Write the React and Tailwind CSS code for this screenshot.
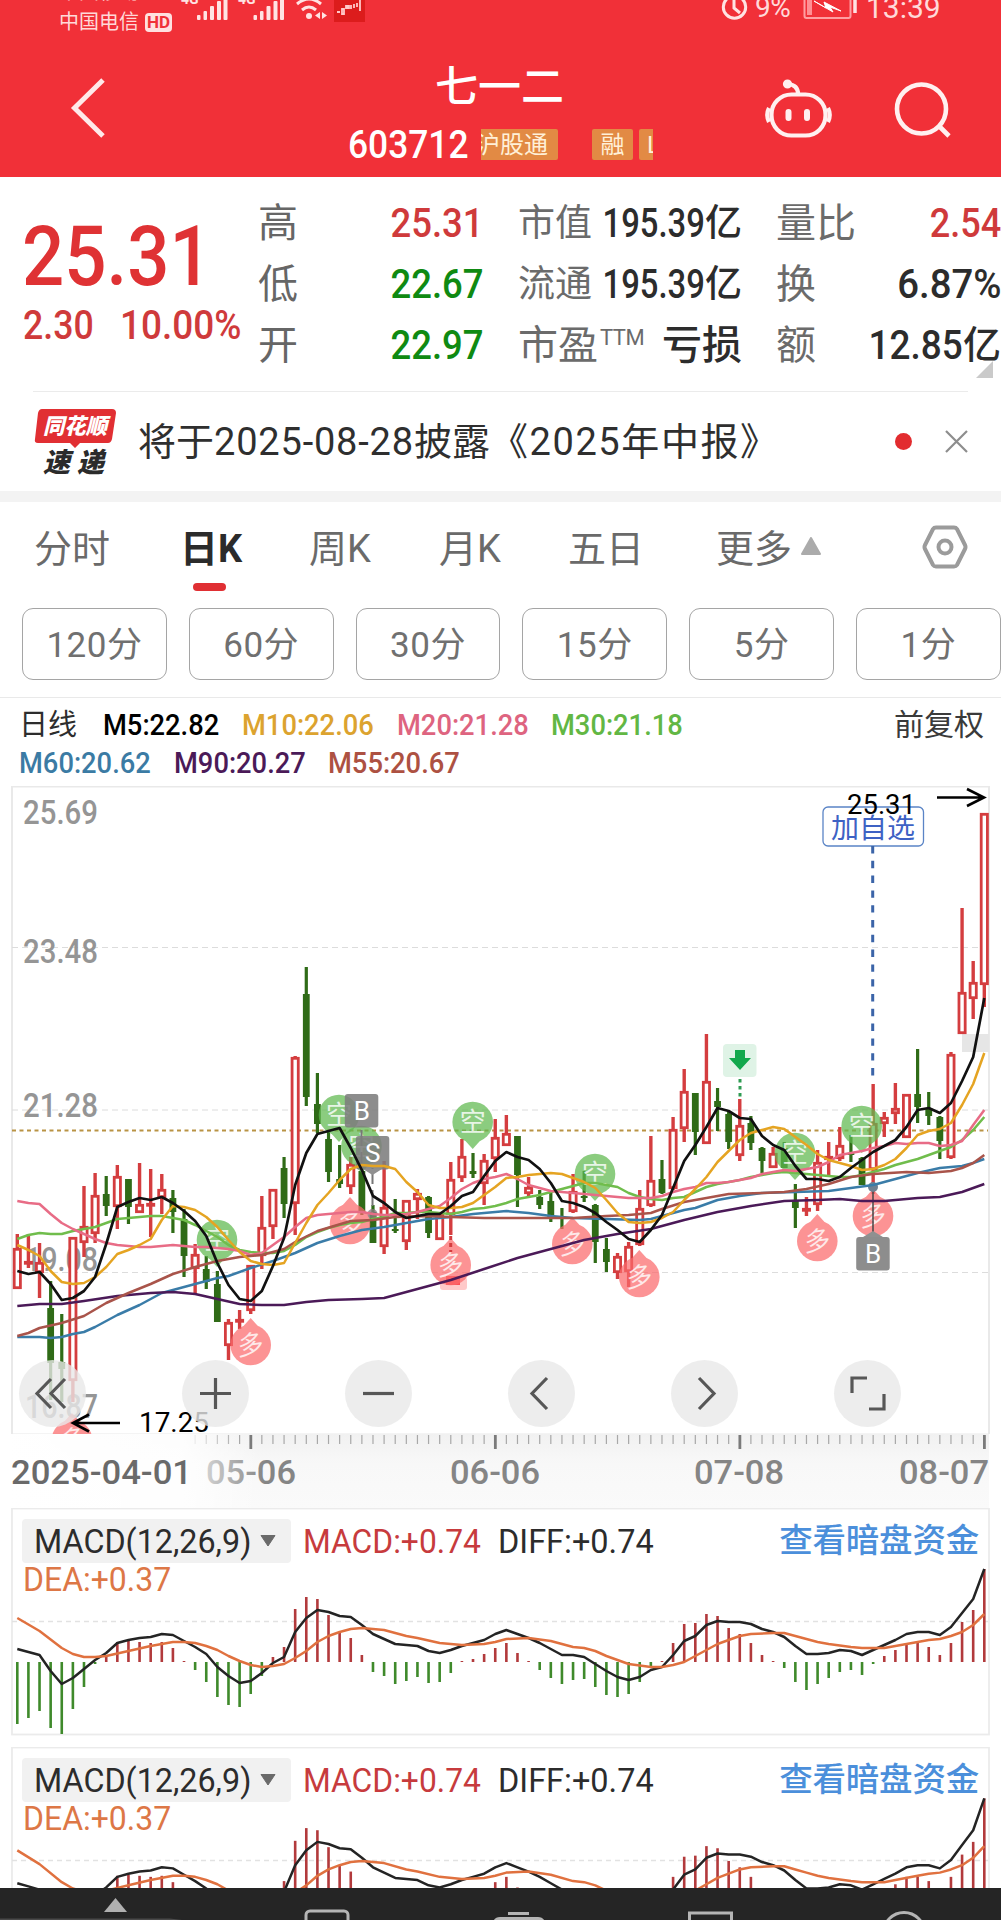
import React from 'react';
import clsx from 'clsx';

const RED = '#d43d3f';
const GREEN = '#2f6b17';
const CJK = "Roboto, 'Noto Sans CJK SC', sans-serif";

const px = (i) => 17.3 + i * 11.115;

// [high, body top, body bottom, low, up?]
const CANDLES = [
    [1234, 1248, 1289, 1289, 1], [1234, 1261, 1263, 1268, 1], [1243, 1262, 1273, 1298, 1], [1281, 1308, 1363, 1400, 0],
    [1314, 1362, 1369, 1402, 0], [1237, 1237, 1381, 1402, 1], [1186, 1226, 1243, 1257, 1], [1173, 1195, 1234, 1243, 1],
    [1176, 1194, 1206, 1216, 0], [1165, 1176, 1207, 1229, 1], [1179, 1179, 1207, 1224, 0], [1163, 1204, 1213, 1213, 1],
    [1169, 1203, 1205, 1237, 1], [1174, 1189, 1198, 1214, 1], [1190, 1198, 1212, 1233, 0], [1209, 1219, 1256, 1277, 0],
    [1244, 1254, 1269, 1293, 1], [1256, 1269, 1282, 1289, 0], [1271, 1284, 1322, 1322, 0], [1319, 1322, 1346, 1360, 1],
    [1310, 1319, 1321, 1329, 1], [1265, 1265, 1311, 1314, 1], [1196, 1227, 1256, 1269, 1], [1189, 1189, 1227, 1239, 1],
    [1157, 1168, 1204, 1218, 0], [1056, 1057, 1204, 1235, 1], [967, 994, 1097, 1106, 0], [1073, 1104, 1124, 1133, 0],
    [1131, 1139, 1172, 1182, 0], [1145, 1179, 1184, 1188, 0], [1157, 1164, 1187, 1194, 1], [1165, 1171, 1212, 1215, 0],
    [1205, 1212, 1243, 1243, 0], [1161, 1207, 1247, 1254, 1], [1199, 1229, 1231, 1233, 0], [1200, 1200, 1242, 1250, 1],
    [1189, 1193, 1200, 1219, 1], [1196, 1197, 1233, 1238, 0], [1214, 1214, 1240, 1240, 1], [1162, 1179, 1215, 1235, 1],
    [1139, 1156, 1178, 1182, 1], [1153, 1171, 1174, 1178, 0], [1154, 1160, 1184, 1205, 1], [1119, 1137, 1159, 1172, 1],
    [1115, 1133, 1146, 1146, 1], [1136, 1136, 1175, 1207, 0], [1177, 1187, 1194, 1197, 1], [1190, 1197, 1205, 1209, 0],
    [1190, 1201, 1217, 1222, 0], [1208, 1217, 1218, 1229, 0], [1174, 1191, 1212, 1213, 1], [1171, 1196, 1198, 1202, 0],
    [1204, 1205, 1242, 1263, 0], [1238, 1249, 1262, 1272, 0], [1253, 1256, 1273, 1279, 1], [1242, 1246, 1272, 1287, 1],
    [1190, 1208, 1245, 1246, 1], [1136, 1180, 1206, 1207, 1], [1160, 1179, 1193, 1194, 0], [1117, 1129, 1189, 1190, 1],
    [1069, 1091, 1129, 1142, 1], [1093, 1093, 1132, 1155, 0], [1034, 1081, 1144, 1144, 1], [1088, 1101, 1107, 1131, 0],
    [1112, 1114, 1142, 1149, 0], [1099, 1125, 1156, 1161, 1], [1116, 1123, 1143, 1150, 0], [1147, 1148, 1161, 1173, 0],
    [1147, 1153, 1168, 1168, 1], [1142, 1148, 1168, 1168, 0], [1184, 1200, 1208, 1228, 0], [1197, 1208, 1211, 1216, 1],
    [1150, 1162, 1205, 1211, 1], [1142, 1156, 1160, 1175, 1], [1127, 1145, 1159, 1161, 1], [1135, 1153, 1155, 1162, 0],
    [1157, 1158, 1185, 1185, 0], [1084, 1123, 1170, 1194, 1], [1112, 1117, 1124, 1137, 1], [1083, 1108, 1114, 1124, 1],
    [1094, 1094, 1138, 1138, 1], [1049, 1094, 1107, 1123, 0], [1092, 1108, 1116, 1125, 0], [1116, 1117, 1141, 1159, 0],
    [1052, 1054, 1158, 1159, 1], [908, 992, 1034, 1034, 1], [961, 982, 999, 1019, 1], [813, 813, 985, 1007, 1],
];

// one value per bar
const M5 = [
    1271, 1274, 1272, 1284, 1300, 1298, 1291, 1277, 1244, 1207, 1202, 1198, 1200, 1197, 1203, 1211, 1221, 1236, 1263, 1285, 1299, 1301,
    1291, 1266, 1238, 1185, 1153, 1134, 1131, 1128, 1148, 1170, 1196, 1203, 1212, 1218, 1216, 1214, 1214, 1206, 1196, 1192, 1176, 1161,
    1152, 1157, 1160, 1169, 1183, 1201, 1203, 1207, 1213, 1222, 1230, 1239, 1242, 1230, 1215, 1188, 1161, 1145, 1127, 1108, 1111, 1118,
    1119, 1136, 1145, 1150, 1166, 1179, 1179, 1181, 1177, 1168, 1160, 1152, 1146, 1140, 1127, 1110, 1108, 1113, 1103, 1081, 1057, 998,
];
const M10 = [
    1245, 1250, 1256, 1271, 1282, 1284, 1283, 1277, 1267, 1254, 1250, 1245, 1239, 1220, 1206, 1207, 1210, 1217, 1227, 1240, 1252, 1261,
    1264, 1265, 1263, 1243, 1223, 1205, 1193, 1180, 1169, 1165, 1166, 1166, 1169, 1182, 1192, 1205, 1208, 1208, 1207, 1203, 1195, 1187,
    1178, 1177, 1175, 1174, 1173, 1174, 1178, 1182, 1188, 1200, 1213, 1222, 1223, 1222, 1218, 1212, 1200, 1189, 1177, 1162, 1151, 1140,
    1133, 1130, 1127, 1129, 1137, 1145, 1154, 1160, 1163, 1166, 1170, 1169, 1165, 1159, 1148, 1135, 1131, 1129, 1123, 1105, 1084, 1053,
];
const M20 = [
    1201, 1203, 1204, 1214, 1223, 1229, 1234, 1239, 1243, 1245, 1246, 1247, 1247, 1246, 1245, 1246, 1247, 1247, 1248, 1249, 1251, 1255,
    1253, 1245, 1237, 1227, 1218, 1215, 1214, 1213, 1212, 1212, 1214, 1215, 1215, 1214, 1212, 1209, 1206, 1198, 1189, 1183, 1179, 1177,
    1174, 1179, 1185, 1188, 1191, 1192, 1193, 1194, 1195, 1196, 1197, 1198, 1198, 1198, 1196, 1192, 1189, 1187, 1183, 1183, 1182, 1180,
    1178, 1174, 1172, 1170, 1171, 1169, 1167, 1162, 1155, 1153, 1151, 1148, 1146, 1143, 1144, 1143, 1143, 1146, 1145, 1141, 1125, 1110,
];
const M30 = [
    1239, 1235, 1233, 1234, 1234, 1231, 1229, 1227, 1223, 1219, 1218, 1217, 1216, 1216, 1218, 1220, 1225, 1231, 1237, 1245, 1250, 1252,
    1253, 1253, 1251, 1245, 1237, 1232, 1228, 1225, 1223, 1222, 1219, 1217, 1213, 1213, 1212, 1212, 1213, 1214, 1212, 1209, 1208, 1206,
    1203, 1199, 1197, 1195, 1192, 1189, 1186, 1183, 1183, 1185, 1187, 1193, 1197, 1199, 1200, 1198, 1197, 1192, 1187, 1184, 1182, 1180,
    1177, 1175, 1173, 1172, 1173, 1174, 1175, 1176, 1177, 1177, 1175, 1172, 1169, 1165, 1162, 1159, 1155, 1151, 1147, 1140, 1130, 1117,
];

// [bar index, y]
const M60 = [
    [0, 1337], [2, 1337], [3, 1338], [4, 1337], [5, 1334], [6, 1332], [7, 1327], [9, 1315], [11, 1305], [13, 1293], [14, 1290], [16, 1284],
    [18, 1278], [19, 1276], [21, 1268], [23, 1261], [25, 1253], [27, 1243], [29, 1236], [31, 1230], [33, 1227], [35, 1223], [37, 1219],
    [39, 1217], [41, 1214], [43, 1212], [44, 1211], [46, 1213], [48, 1216], [50, 1218], [53, 1219], [56, 1220], [57, 1219], [58, 1216],
    [60, 1210], [61, 1208], [63, 1200], [65, 1196], [67, 1193], [70, 1192], [73, 1191], [75, 1188], [77, 1185], [79, 1179], [81, 1173],
    [83, 1168], [85, 1166], [86, 1163], [87, 1159],
];
const M90 = [
    [0, 1306], [2, 1304], [4, 1304], [6, 1301], [9, 1296], [12, 1293], [14, 1292], [16, 1294], [18, 1299], [20, 1304], [22, 1305],
    [24, 1305], [26, 1302], [28, 1300], [31, 1299], [33, 1298], [36, 1289], [39, 1280], [42, 1269], [45, 1258], [48, 1249], [51, 1240],
    [54, 1234], [57, 1229], [60, 1220], [63, 1212], [66, 1206], [69, 1201], [72, 1200], [74, 1199], [76, 1201], [78, 1201], [81, 1198],
    [83, 1197], [85, 1192], [87, 1184],
];
const M55 = [
    [0, 1336], [1, 1333], [2, 1328], [4, 1323], [6, 1316], [8, 1303], [10, 1293], [12, 1284], [14, 1274], [16, 1267], [18, 1261],
    [20, 1257], [22, 1255], [24, 1249], [25, 1242], [27, 1231], [30, 1221], [32, 1220], [34, 1217], [37, 1216], [39, 1217], [42, 1218],
    [50, 1218], [53, 1216], [55, 1215], [57, 1213], [58, 1209], [60, 1202], [62, 1198], [64, 1194], [67, 1193], [69, 1192], [71, 1189],
    [73, 1184], [75, 1177], [77, 1174], [80, 1172], [82, 1173], [84, 1171], [85, 1168], [86, 1163], [87, 1155],
];

const MACD_BARS = [
    1724, 1718, 1711, 1728, 1734, 1709, 1687, 1664, 1657, 1642, 1641, 1642, 1643, 1642, 1648, 1661, 1670, 1682, 1697, 1705, 1707, 1694,
    1676, 1657, 1647, 1609, 1597, 1599, 1615, 1632, 1638, 1655, 1672, 1676, 1684, 1681, 1677, 1683, 1682, 1673, 1661, 1659, 1654, 1648,
    1643, 1653, 1661, 1670, 1678, 1684, 1680, 1679, 1687, 1695, 1697, 1694, 1682, 1666, 1661, 1643, 1624, 1623, 1614, 1616, 1628, 1634,
    1643, 1655, 1661, 1668, 1682, 1690, 1684, 1678, 1672, 1670, 1675, 1664, 1656, 1650, 1643, 1643, 1647, 1655, 1643, 1622, 1610, 1569,
];
const DIFF = [
    1649, 1652, 1655, 1671, 1684, 1678, 1669, 1660, 1653, 1643, 1640, 1638, 1637, 1634, 1635, 1641, 1647, 1654, 1667, 1676, 1683, 1681,
    1673, 1663, 1657, 1632, 1618, 1610, 1612, 1616, 1617, 1625, 1634, 1639, 1644, 1645, 1646, 1651, 1653, 1650, 1646, 1643, 1640, 1634,
    1630, 1634, 1638, 1643, 1649, 1655, 1655, 1657, 1664, 1671, 1677, 1680, 1677, 1670, 1667, 1655, 1641, 1636, 1625, 1621, 1622, 1622,
    1624, 1629, 1632, 1637, 1646, 1654, 1654, 1653, 1650, 1651, 1655, 1650, 1645, 1640, 1634, 1632, 1632, 1635, 1627, 1613, 1599, 1569,
];
const DEA = [
    [0, 1618], [2, 1631], [4, 1648], [5, 1654], [6, 1657], [7, 1657], [8, 1656], [10, 1651], [12, 1646], [14, 1642], [15, 1642], [16, 1643],
    [17, 1646], [18, 1650], [19, 1656], [20, 1661], [21, 1665], [22, 1667], [23, 1666], [24, 1664], [25, 1658], [26, 1651], [27, 1642],
    [28, 1636], [29, 1632], [30, 1629], [31, 1628], [32, 1629], [33, 1630], [35, 1636], [36, 1638], [38, 1643], [40, 1645], [42, 1644],
    [43, 1642], [44, 1639], [46, 1638], [48, 1641], [50, 1647], [51, 1648], [52, 1651], [53, 1656], [54, 1660], [55, 1664], [57, 1667],
    [58, 1667], [59, 1665], [60, 1662], [61, 1656], [62, 1650], [63, 1644], [64, 1640], [65, 1636], [66, 1634], [68, 1633], [69, 1633],
    [70, 1636], [71, 1639], [72, 1642], [73, 1644], [75, 1647], [76, 1648], [78, 1648], [79, 1646], [81, 1642], [82, 1640], [83, 1639],
    [84, 1636], [85, 1632], [86, 1625], [87, 1614],
];

const toPoints = (data) =>
    data.map((d, i) => (Array.isArray(d) ? `${px(d[0])},${d[1]}` : `${px(i)},${d}`)).join(' ');

const Line = ({ data, color, width = 2.5 }) => (
    <polyline points={toPoints(data)} fill="none" stroke={color} strokeWidth={width} strokeLinejoin="round" vectorEffect="non-scaling-stroke" />
);

const Label = ({ x, y, w, size, fill, weight = 400, opacity, children }) => (
    <text x={x} y={y} textLength={w} lengthAdjust="spacingAndGlyphs" fontSize={size} fill={fill} fontWeight={weight} opacity={opacity} fontFamily={CJK}>
        {children}
    </text>
);

const Bubble = ({ x, y, up }) => (
    <g transform={`translate(${x} ${y})`}>
        <g opacity="0.72">
            <circle r="20.3" fill={up ? '#fb6a6c' : '#5fb94f'} />
            <path d={up ? 'M-9 -17 L0 -27 L9 -17 Z' : 'M-9 17 L0 27 L9 17 Z'} fill={up ? '#fb6a6c' : '#5fb94f'} />
        </g>
        <text
            textAnchor="middle"
            y="9"
            fontSize="26"
            fill="#fff"
            opacity="0.8"
            transform={up ? 'rotate(-8) skewX(-8)' : undefined}
            fontFamily={CJK}
        >
            {up ? '多' : '空'}
        </text>
    </g>
);

const Flag = ({ x, y, letter }) => (
    <g>
        <rect x={x} y={y} width="33.5" height="33.5" rx="3" fill="#7d7d7d" opacity="0.88" />
        <text x={x + 17} y={y + 26} textAnchor="middle" fontSize="26" fill="#fff" fontFamily={CJK}>{letter}</text>
    </g>
);

const StatusBar = () => (
    <div className="flex h-9 justify-between overflow-hidden text-[#ffd9d9]">
        <div className="flex">
            <div className="ml-[59px] mt-[-21px] flex h-[56px] w-[116px] flex-col text-[20px] leading-[26px]">
                <span>中国移动</span>
                <div className="mt-[4px] flex items-center">
                    <span>中国电信</span>
                    <span className="ml-[6px] flex h-[19px] w-[27px] items-center justify-center rounded-[4px] bg-[#ffe0e0] text-[17px] font-bold text-[#f03038]">HD</span>
                </div>
            </div>
            <svg width="200" height="36" viewBox="175 0 200 36" fill="#ffe3e3">
                <text x="181" y="4" fontSize="14" fontWeight="700" fontFamily={CJK}>4G</text>
                <text x="238" y="4" fontSize="14" fontWeight="700" fontFamily={CJK}>4G</text>
                {[197, 253.5].map((x) => (
                    <g key={x}>
                        <rect x={x} y="15" width="3.5" height="5" rx="1" />
                        <rect x={x + 6.5} y="11" width="3.5" height="9" rx="1" />
                        <rect x={x + 13} y="6" width="4" height="14" rx="1" />
                        <rect x={x + 20} y="1" width="4" height="19" rx="1" />
                        <rect x={x + 26.5} y="-6" width="4" height="26" rx="1" />
                    </g>
                ))}
                <circle cx="309" cy="16" r="3" />
                <path d="M302 10 Q309 4 316 10 M297 4 Q309 -6 321 4" fill="none" stroke="#ffe3e3" strokeWidth="3" />
                <path d="M320 12 v7 l-5 -3.5 Z M322 12 v7 l5 -3.5 Z" />
                <rect x="334" y="-4" width="31" height="26" fill="#dc1c1c" />
                <path d="M337 12 h3 M342 9 v5 h2 v-5 Z M346 6 h3 v2 h-3 Z M351 5 v4 M354 4 v4 M357 3 v4 M360 -2 v13" stroke="#ffc9c9" strokeWidth="1.8" fill="none" />
            </svg>
        </div>
        <div className="mr-[58px] flex">
            <svg width="30" height="36" viewBox="720 0 30 36" fill="none" stroke="#ffe3e3" strokeWidth="3">
                <circle cx="734.5" cy="7" r="11.2" />
                <path d="M734 0 v8 l6 5" />
            </svg>
            <span className="mt-[-10px] w-[48px] pl-[5px] text-[28px] leading-9 tracking-[-0.5px]">9%</span>
            <svg width="66" height="36" viewBox="798 0 66 36" fill="none" stroke="#ff9ea2" strokeWidth="2">
                <rect x="804.500" y="-10" width="46" height="28" rx="2" />
                <rect x="807" y="-8" width="5" height="23" fill="#ff8f94" stroke="none" />
                <path d="M814 1 L826 8 L824 2 L841 11 L830 7 L833 12 Z" fill="#fff" stroke="#fff" strokeWidth="1" />
                <path d="M855 0 v13" stroke="#ffe3e3" strokeWidth="3.500" />
            </svg>
            <span className="mt-[-10px] w-[79px] pl-[2px] text-[30px] leading-9">13:39</span>
        </div>
    </div>
);

const Tag = ({ className, children }) => (
    <span className={clsx('flex h-[31px] shrink-0 items-center rounded-[2px] bg-[#e28a44] text-[24px] leading-none text-[#fff0d8]', className)}>
        {children}
    </span>
);

const Header = () => (
    <header className="h-[177px] bg-[#f13038]">
        <StatusBar />
        <div className="flex h-[141px]">
            <svg width="281" height="141" viewBox="0 36 281 141" fill="none" stroke="#ffe9e9" strokeWidth="5">
                <path d="M103 80 L74.500 108 L103 136" />
            </svg>
            <div className="flex w-[372px] flex-col pl-[67px]">
                <h1 className="mt-[19px] w-[300px] pl-[87px] text-[43px] font-medium leading-[64px] text-white">七一二</h1>
                <div className="mt-[10px] flex h-[31px] items-center">
                    <span className="inline-block w-[133px] shrink-0 origin-left scale-x-[0.93] text-[38px] font-medium leading-none text-white">603712</span>
                    <div className="flex w-[172px] overflow-hidden">
                        <Tag className="ml-[-13px] w-[90px] pl-[8px]">沪股通</Tag>
                        <Tag className="ml-[34px] w-[41px] justify-center">融</Tag>
                        <Tag className="ml-[6px] w-[60px] pl-[8px]">L1</Tag>
                    </div>
                </div>
            </div>
            <svg className="ml-auto" width="250" height="141" viewBox="751 36 250 141" fill="none" stroke="#fff0f0" strokeWidth="4.200">
                <rect x="771.500" y="94.500" width="54" height="41" rx="20" />
                <path d="M798 94 q0 -9 -10 -10" />
                <circle cx="787.500" cy="84" r="2.500" fill="#fff0f0" />
                <path d="M769 108 q-3.500 7 0 14 M828 108 q3.500 7 0 14" />
                <path d="M788.500 112 v6 M807 112 v6" strokeWidth="6" strokeLinecap="round" />
                <circle cx="921.500" cy="109" r="24.500" strokeWidth="4.600" />
                <path d="M938 125 L949 136" strokeWidth="4.600" />
            </svg>
        </div>
    </header>
);

const Num = ({ className, children }) => (
    <span className={clsx('inline-block text-[41px] font-medium leading-none', className)}>{children}</span>
);

const Quote = () => (
    <section className="relative flex h-[214px]">
        <div className="w-[258px] pl-6 text-[#df3234]">
            <div className="ml-[-2px] mt-[38px] w-[200px] origin-left scale-x-[0.885] text-[84px] font-medium leading-[83px]">25.31</div>
            <div className="mt-[7px] flex text-[#cf3a3b]">
                <Num className="ml-[-1px] w-[97px] origin-left scale-x-[0.87]">2.30</Num>
                <Num className="origin-left scale-x-[0.9]">10.00%</Num>
            </div>
        </div>
        <div className="mt-[16px] flex w-[226px] flex-col text-[40px] leading-[61px] text-[#666]">
            <div className="flex items-center justify-between">高<Num className="origin-right scale-x-[0.89] text-[#cf3a3b]">25.31</Num></div>
            <div className="flex items-center justify-between">低<Num className="origin-right scale-x-[0.89] text-[#0f8a12]">22.67</Num></div>
            <div className="flex items-center justify-between">开<Num className="origin-right scale-x-[0.89] text-[#0f8a12]">22.97</Num></div>
        </div>
        <div className="ml-[34px] mt-[16px] flex w-[224px] flex-col text-[37px] leading-[61px] text-[#6b6b6b]">
            {['市值', '流通'].map((name) => (
                <div key={name} className="flex items-center">
                    <span className="w-[74px] shrink-0">{name}</span>
                    <div className="flex w-[150px] shrink-0 items-center justify-end text-[#2c2c2c]">
                        <Num className="origin-right scale-x-[0.8]">195.39</Num>
                        <span className="font-medium">亿</span>
                    </div>
                </div>
            ))}
            <div className="flex text-[40px]">
                <span>市盈</span>
                <span className="ml-[2px] mt-[-8px] text-[22px] tracking-[-0.5px]">TTM</span>
                <span className="ml-auto font-medium text-[#2c2c2c]">亏损</span>
            </div>
        </div>
        <div className="ml-[34px] mt-[16px] flex w-[225px] flex-col text-[40px] leading-[61px] text-[#6b6b6b]">
            <div className="flex items-center justify-between">量比<Num className="origin-right scale-x-[0.88] text-[#cf3a3b]">2.54</Num></div>
            <div className="flex items-center justify-between">换<Num className="origin-right scale-x-[0.935] text-[#2c2c2c]">6.87%</Num></div>
            <div className="flex items-center">
                额
                <div className="ml-auto flex items-center text-[#2c2c2c]">
                    <Num className="origin-right scale-x-[0.9]">12.85</Num>
                    <span className="text-[38px] font-medium">亿</span>
                </div>
            </div>
        </div>
        <svg className="absolute bottom-[13px] right-2" width="17" height="17">
            <path d="M17 0 V17 H0 Z" fill="#cacaca" />
        </svg>
    </section>
);

const Notice = () => (
    <section className="flex h-[100px]">
        <div className="ml-[33px] flex w-[935px] items-center border-t border-[#ebebeb]">
            <svg width="105" height="98" viewBox="33 392 105 98">
                <path d="M42 408 H112 Q116 408 116 412 L112 438 Q111 442 108 442 H80 L75 447 L70 442 H38 Q34 442 35 438 L38 412 Q39 408 42 408 Z" fill="#e12f33" />
                <text x="43" y="433" textLength="64" lengthAdjust="spacingAndGlyphs" fontSize="22" fontWeight="900" fontStyle="italic" fill="#fff" fontFamily={CJK}>同花顺</text>
                <text x="43" y="471" textLength="61" fontSize="27" fontWeight="900" fontStyle="italic" fill="#2b2b2b" fontFamily={CJK}>速递</text>
            </svg>
            <p className="whitespace-nowrap text-[38px] leading-none text-[#2f2f2f]">
                将于<span className="tracking-[0.8px]">2025-08-28</span>披露<span className="tracking-[1.6px]">《2025年中报》</span>
            </p>
            <span className="ml-auto h-[17px] w-[17px] rounded-full bg-[#e22c2f]" />
            <svg className="ml-[33px]" width="23" height="23" stroke="#8d8d8d" strokeWidth="2.200">
                <path d="M1 1 L22 22 M22 1 L1 22" />
            </svg>
        </div>
    </section>
);

const TABS = [
    { name: '分时', box: 'w-[146px]' },
    { name: '日K', box: 'w-[129px]', active: true },
    { name: '周K', box: 'w-[130px]' },
    { name: '月K', box: 'w-[129px]' },
    { name: '五日', box: 'w-[148px]' },
];

const Tabs = () => (
    <nav className="flex h-[117px] border-t-[11px] border-[#f3f3f3] pl-[34px] text-[38px] text-[#6a6a6a]">
        {TABS.map((t) => (
            <div key={t.name} className={clsx('relative pt-[15px] leading-[64px]', t.box, t.active && 'font-bold text-[#2b2b2b]')}>
                {t.name}
                {t.active && <span className="absolute bottom-[17px] left-[13px] h-[8px] w-[33px] rounded-full bg-[#e02f33]" />}
            </div>
        ))}
        <div className="flex pt-[15px] leading-[64px]">
            更多
            <svg className="ml-[8px] mt-[20px]" width="22" height="20">
                <path d="M11 1 L20 17 H2 Z" fill="#ababab" stroke="#ababab" strokeWidth="2" strokeLinejoin="round" />
            </svg>
        </div>
        <svg className="ml-auto mr-[33px] mt-[23px]" width="46" height="44" fill="none" stroke="#9b9b9b" strokeWidth="4">
            <path d="M14 2.500 H32 Q34 2.500 35 4 L43 20 Q44 22 43 24 L35 40 Q34 41.500 32 41.500 H14 Q12 41.500 11 40 L3 24 Q2 22 3 20 L11 4 Q12 2.500 14 2.500 Z" />
            <circle cx="23" cy="22" r="6.500" />
        </svg>
    </nav>
);

const Periods = () => (
    <div className="flex h-[90px] gap-[22px] border-b border-[#e9e9e9] pl-[22px]">
        {['120分', '60分', '30分', '15分', '5分', '1分'].map((p) => (
            <button key={p} className="h-[72px] w-[144.8px] shrink-0 rounded-[11px] border border-[#a5a5a5] pt-[3px] text-[35px] leading-none tracking-[0.5px] text-[#707070]">
                {p}
            </button>
        ))}
    </div>
);

const Legend = () => (
    <div className="h-[88px] pl-[19px] pr-[17px] pt-[8px] text-[30px] font-medium leading-[38px]">
        <div className="flex">
            <span className="w-[84px] text-[29px] font-normal text-[#2d2d2d]">日线</span>
            <span className="w-[139px] origin-left scale-x-[0.91] text-black">M5:22.82</span>
            <span className="w-[155px] origin-left scale-x-[0.91] text-[#dca32f]">M10:22.06</span>
            <span className="w-[154px] origin-left scale-x-[0.91] text-[#de6480]">M20:21.28</span>
            <span className="origin-left scale-x-[0.91] text-[#62b744]">M30:21.18</span>
            <span className="ml-auto font-normal text-[#3a3a3a]">前复权</span>
        </div>
        <div className="flex">
            <span className="w-[155px] origin-left scale-x-[0.91] text-[#3b7ba4]">M60:20.62</span>
            <span className="w-[154px] origin-left scale-x-[0.91] text-[#4b1a58]">M90:20.27</span>
            <span className="origin-left scale-x-[0.91] text-[#ad5142]">M55:20.67</span>
        </div>
    </div>
);

const CONTROLS = [
    'M32 19 L18 33.500 L32 48 M46 19 L32 33.500 L46 48',
    'M18 33.500 H49 M33.500 18 V49',
    'M18 33.500 H49',
    'M39 18 L24 33.500 L39 49',
    'M28 18 L43 33.500 L28 49',
    'M18 33 V18 H33 M35 49 H50 V34',
];

const KChart = () => (
    <section className="relative h-[648px]">
        <svg className="block" width="1001" height="648" viewBox="0 786 1001 648">
            <rect x="12" y="786.500" width="977" height="648" fill="none" stroke="#e9e9e9" strokeWidth="2" />
            {[947.5, 1110, 1272.5].map((y) => (
                <path key={y} d={`M12 ${y} H988`} stroke="#dcdcdc" strokeDasharray="6 4" />
            ))}
            <Label x="23" y="824" w="75" size="33" weight="500" fill="#959595">25.69</Label>
            <Label x="23" y="963" w="75" size="33" weight="500" fill="#959595">23.48</Label>
            <Label x="23" y="1117" w="75" size="33" weight="500" fill="#959595">21.28</Label>
            <Label x="25" y="1271" w="73" size="33" weight="500" fill="#959595">19.08</Label>
            <Label x="25" y="1418" w="73" size="33" weight="500" fill="#959595">16.87</Label>
            <path d="M12 1130.500 H988" stroke="#b99345" strokeWidth="1.800" strokeDasharray="4 3.500" />
            <rect x="962" y="1034" width="27" height="18" fill="#e6e6e6" />

            {CANDLES.map(([hi, top, bot, lo, up], i) => {
                const x = px(i);
                if (!up) {
                    return (
                        <g key={i} fill={GREEN}>
                            <rect x={x - 1.6} y={hi} width="3.2" height={lo - hi} />
                            <rect x={x - 3.4} y={top} width="6.800" height={bot - top} />
                        </g>
                    );
                }
                return (
                    <g key={i}>
                        <path d={`M${x} ${hi} V${top} M${x} ${bot} V${lo}`} stroke={RED} strokeWidth="3.400" />
                        <rect x={x - 3.1} y={top + 1.3} width="6.200" height={Math.max(bot - top - 2.6, 1)} fill="#fff" stroke={RED} strokeWidth="2.800" />
                    </g>
                );
            })}

            <rect x="440" y="1277" width="27" height="13" rx="3" fill="#ffc9c9" />
            <rect x="446" y="1276" width="14" height="9" fill="#ff4f56" />
            <Bubble x={217} y={1240} />
            <Bubble x={339} y={1115} />
            <Bubble x={361.5} y={1146} />
            <Bubble x={472.7} y={1122} />
            <Bubble x={595} y={1174} />
            <Bubble x={795} y={1153} />
            <Bubble x={861.7} y={1126} />
            <Bubble up x={72} y={1440} />
            <Bubble up x={250.7} y={1345} />
            <Bubble up x={350} y={1224} />
            <Bubble up x={450.7} y={1265} />
            <Bubble up x={572.3} y={1244} />
            <Bubble up x={639.3} y={1277} />
            <Bubble up x={817.3} y={1241} />
            <Bubble up x={873} y={1216} />
            <path d="M450.700 1236 V1252" stroke={RED} strokeWidth="3" strokeDasharray="4 3" />

            <path d="M873 1187 V1232" stroke="#444" strokeWidth="1.500" />
            <circle cx="873" cy="1187" r="5" fill="#6f8091" />
            <path d="M361.500 1130 V1172 M372.500 1168 V1215" stroke="#777" strokeWidth="2" strokeDasharray="16 6" />
            <Flag x={344.800} y={1094} letter="B" />
            <Flag x={355.800} y={1136} letter="S" />
            <path d="M363 1169 H382 L372.500 1175 Z M863 1237 L873 1231 L883 1237 Z" fill="#909090" />
            <circle cx="372.500" cy="1214" r="5" fill="#8b7a80" opacity="0.8" />
            <Flag x={856.200} y={1237} letter="B" />

            <Line data={M60} color="#3a7ca8" />
            <Line data={M90} color="#4b1a58" />
            <Line data={M30} color="#70bd4c" />
            <Line data={M20} color="#e86c86" />
            <Line data={M55} color="#a9544a" />
            <Line data={M10} color="#e5a422" />
            <Line data={M5} color="#111" width={2.700} />

            <rect x="723" y="1044" width="33.500" height="33" rx="4" fill="#dff3e6" />
            <path d="M735 1050 H745 V1058 H751 L740 1070 L729 1058 H735 Z" fill="#12a84c" />
            <path d="M740 1079 V1099" stroke="#2e9b52" strokeWidth="3" strokeDasharray="3.500 3.500" />

            <rect x="823" y="807" width="100.500" height="39" rx="5" fill="#fff" stroke="#5a84c6" strokeWidth="1.300" />
            <Label x="831" y="838" w="84" size="27" fill="#3e62c4">加自选</Label>
            <path d="M872.700 846 V1077" stroke="#3b64a8" strokeWidth="3" strokeDasharray="7.400 7.400" />
            <Label x="847" y="814" w="69" size="28" fill="#000">25.31</Label>
            <path d="M937 797.500 H983 M967 789 L984 797.500 L967 806" fill="none" stroke="#000" strokeWidth="2.600" />
            <Label x="139" y="1432" w="70" size="28" fill="#000">17.25</Label>
            <path d="M120 1423 H74 M89 1414.500 L73 1423 L89 1431.500" fill="none" stroke="#000" strokeWidth="2.600" />
        </svg>
        <div className="absolute left-[19px] top-[574px] flex gap-[96px]">
            {CONTROLS.map((d) => (
                <button key={d} className="h-[67px] w-[67px] rounded-full bg-[#e8e8e8]/80">
                    <svg width="67" height="67" fill="none" stroke="#575757" strokeWidth="3.200">
                        <path d={d} />
                    </svg>
                </button>
            ))}
        </div>
    </section>
);

const TimeAxis = () => (
    <svg className="block" width="1001" height="74" viewBox="0 1434 1001 74">
        <defs>
            <linearGradient id="axis" x1="0" y1="0" x2="0" y2="1">
                <stop offset="0" stopColor="#f1f1f1" />
                <stop offset="0.400" stopColor="#f8f8f8" />
                <stop offset="1" stopColor="#fafafa" />
            </linearGradient>
            <linearGradient id="fade" x1="0" x2="1">
                <stop offset="0" stopColor="#fff" />
                <stop offset="0.700" stopColor="#fff" stopOpacity="0.850" />
                <stop offset="1" stopColor="#fff" stopOpacity="0" />
            </linearGradient>
            <linearGradient id="dateFade" gradientUnits="userSpaceOnUse" x1="205" x2="265" y1="0" y2="0">
                <stop offset="0" stopColor="#d2d2d2" />
                <stop offset="1" stopColor="#858585" />
            </linearGradient>
        </defs>
        <rect x="12" y="1434" width="977" height="74" fill="url(#axis)" />
        <rect x="0" y="1434" width="260" height="74" fill="url(#fade)" />
        {Array.from({ length: 72 }, (_, k) => k + 16).map((i) => {
            const major = [21, 43, 65, 87].includes(i);
            return (
                <rect
                    key={i}
                    x={px(i) - (major ? 1.3 : 0.6)}
                    y="1435"
                    width={major ? 2.8 : 1.2}
                    height={major ? 14 : 9}
                    fill={major ? '#7b7b7b' : '#a8a8a8'}
                    opacity={i < 20 ? (i - 15) * 0.2 : 1}
                />
            );
        })}
        <Label x="11" y="1484" w="181" size="33" weight="500" fill="#6a6a6a">2025-04-01</Label>
        <Label x="206" y="1484" w="90" size="33" weight="500" fill="url(#dateFade)">05-06</Label>
        <Label x="450" y="1484" w="90" size="33" weight="500" fill="#858585">06-06</Label>
        <Label x="694" y="1484" w="90" size="33" weight="500" fill="#858585">07-08</Label>
        <Label x="899" y="1484" w="90" size="33" weight="500" fill="#858585">08-07</Label>
    </svg>
);

const BASE = 1662;

// The lower panel uses a slightly taller value scale than the upper one
const MacdPanel = ({ scale = 1, shift = 0, className }) => (
    <section className={clsx('relative shrink-0', className)}>
        <svg className="block" width="1001" height="228" viewBox="0 1508 1001 228">
            <rect x="12" y="1508.500" width="977" height="226" fill="#fff" stroke="#ebebeb" strokeWidth="1.800" />
            <path d="M12 1621.500 H988" stroke="#e2e2e2" strokeWidth="1.300" strokeDasharray="5 4" />
            <g transform={`translate(0 ${BASE + shift}) scale(1 ${scale}) translate(0 ${-BASE})`}>
                {MACD_BARS.map((y, i) => (
                    <rect
                        key={i}
                        x={px(i) - 1.3}
                        y={Math.min(y, BASE)}
                        width="2.600"
                        height={Math.abs(BASE - y)}
                        fill={y < BASE ? '#b23a3c' : '#3f8a2b'}
                    />
                ))}
                <Line data={DIFF} color="#242424" />
                <Line data={DEA} color="#e0713f" />
            </g>
        </svg>
        <div className="absolute inset-x-0 top-[11px] pl-[22px] pr-[22px] text-[34px]">
            <div className="flex h-[44px] items-center">
                <button className="flex h-[44px] w-[269px] shrink-0 items-center rounded-[4px] bg-[#f1f1f1] pl-[12px] text-[#2c2c2c]">
                    <span className="w-[226px] shrink-0 origin-left scale-x-[0.95] text-left">MACD(12,26,9)</span>
                    <svg width="18" height="14" className="ml-[-1px]">
                        <path d="M2 1.500 H16 L9 12 Z" fill="#6a6a6a" stroke="#6a6a6a" strokeLinejoin="round" />
                    </svg>
                </button>
                <span className="ml-[12px] w-[195px] origin-left scale-x-[0.935] text-[#c73b3d]">MACD:+0.74</span>
                <span className="origin-left scale-x-[0.955] text-[#2c2c2c]">DIFF:+0.74</span>
                <span className="ml-auto whitespace-nowrap text-[33.500px] font-medium tracking-[-0.200px] text-[#4b8fdb]">查看暗盘资金</span>
            </div>
            <div className="ml-[1px] origin-left scale-x-[0.94] leading-[32px] text-[#dd7746]">DEA:+0.37</div>
        </div>
    </section>
);

const BottomNav = () => (
    <svg className="absolute bottom-0 left-0" width="1001" height="32" viewBox="0 1888 1001 32" fill="none" stroke="#b5b5b5" strokeWidth="3">
        <rect x="0" y="1888" width="1001" height="32" fill="#252525" stroke="none" />
        <path d="M0 1918.500 H170 L182 1920 H0 Z" fill="#4a4a4a" stroke="none" />
        <path d="M115.500 1898 L127 1912 H104 Z" fill="#b0b0b0" stroke="none" />
        <rect x="306" y="1911" width="42" height="30" rx="4" />
        <path d="M508 1913.500 H529" />
        <path d="M494 1924 Q495 1918.500 500 1918.500 H538 Q543 1918.500 544 1924" />
        <rect x="689.500" y="1913" width="42" height="30" />
        <circle cx="904" cy="1933" r="20.500" />
    </svg>
);

const App = () => (
    <main className="relative h-[1920px] w-[1001px] overflow-hidden bg-white font-[Roboto,'Noto_Sans_CJK_SC',sans-serif]">
        <Header />
        <Quote />
        <Notice />
        <Tabs />
        <Periods />
        <Legend />
        <KChart />
        <TimeAxis />
        <MacdPanel />
        <MacdPanel scale={1.06} shift={-4} className="mt-[11px]" />
        <BottomNav />
    </main>
);

export default App;
